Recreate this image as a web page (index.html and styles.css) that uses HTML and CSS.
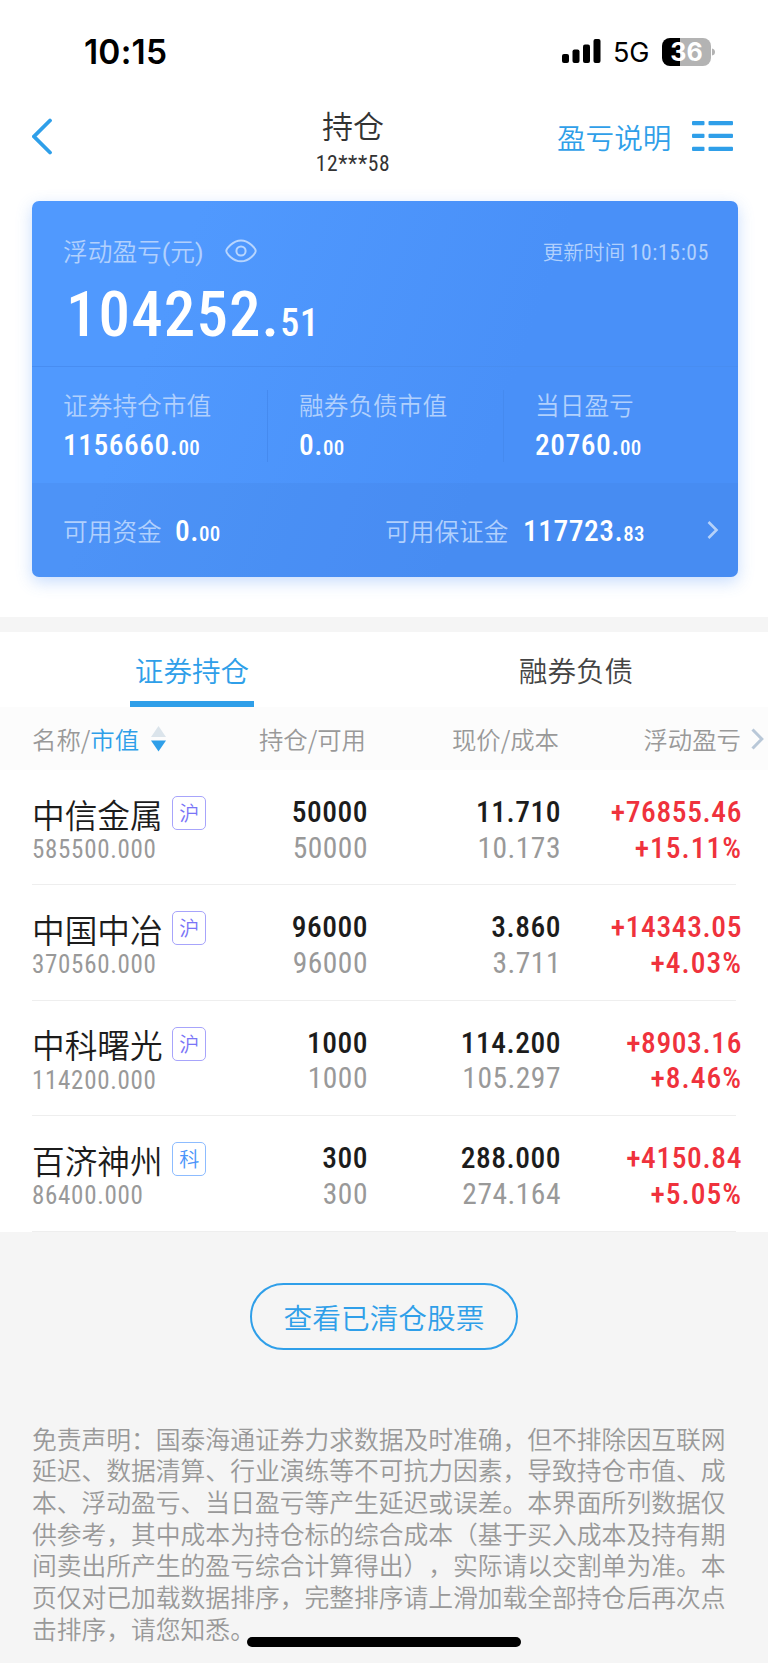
FILE: index.html
```
<!DOCTYPE html>
<html lang="zh-CN">
<head>
    <meta charset="UTF-8">
    <meta name="viewport" content="width=device-width, initial-scale=1.0">
    <title>持仓</title>
    <link rel="stylesheet" href="styles.css">
</head>
<body>
    <div class="status-bar">
        <span class="clock">10:15</span>
        <div class="status-right">
            <svg class="signal" width="39" height="25" viewBox="0 0 39 25">
                <rect x="0" y="15" width="7" height="9" rx="2"/>
                <rect x="10.5" y="10.5" width="7" height="13.5" rx="2"/>
                <rect x="21" y="5.5" width="7" height="18.5" rx="2"/>
                <rect x="31.5" y="0" width="7" height="24" rx="2"/>
            </svg>
            <span class="network">5G</span>
            <div class="battery"><span>36</span></div>
            <svg width="4" height="10" viewBox="0 0 4 10"><path d="M0 1.5Q3 2 3 5T0 8.5z" fill="#b3b3b3"/></svg>
        </div>
    </div>

    <header class="nav">
        <svg class="back" width="22" height="38" viewBox="0 0 22 38">
            <path d="M18 3.5L2 19.5L18 35.5" fill="none" stroke="#2f9fe9" stroke-width="3.8" stroke-linecap="round"/>
        </svg>
        <div class="nav-title">
            <h1>持仓</h1>
            <span class="num">12***58</span>
        </div>
        <div class="nav-right">
            <a>盈亏说明</a>
            <svg width="42" height="32" viewBox="0 0 42 32" fill="#2f9fe9">
                <rect x="0" y="0" width="12.5" height="4.2" rx="1"/>
                <rect x="16.5" y="0" width="24.5" height="4.2" rx="1"/>
                <rect x="0" y="12.8" width="12.5" height="4.2" rx="1"/>
                <rect x="16.5" y="12.8" width="24.5" height="4.2" rx="1"/>
                <rect x="0" y="25.7" width="12.5" height="4.2" rx="1"/>
                <rect x="16.5" y="25.7" width="24.5" height="4.2" rx="1"/>
            </svg>
        </div>
    </header>

    <div class="card-wrap">
        <section class="card">
            <div class="card-top">
                <div class="card-head">
                    <span class="label">浮动盈亏<i class="paren">(</i>元<i class="paren">)</i></span>
                    <svg class="eye" width="32" height="24" viewBox="0 0 32 24" fill="none" stroke="#b7d5fe" stroke-width="2">
                        <path d="M1.3 12C1.3 10 7.5 1.5 16 1.5S30.7 10 30.7 12S24.5 22.3 16 22.3S1.3 14 1.3 12z"/>
                        <circle cx="16" cy="12" r="4.6"/>
                    </svg>
                    <span class="update">更新时间 <span class="num">10:15:05</span></span>
                </div>
                <div class="total num">104252.<small>51</small></div>
            </div>
            <div class="card-mid">
                <div class="item">
                    <span class="label">证券持仓市值</span>
                    <span class="value num">1156660.<small>00</small></span>
                </div>
                <div class="item">
                    <span class="label">融券负债市值</span>
                    <span class="value num">0.<small>00</small></span>
                </div>
                <div class="item">
                    <span class="label">当日盈亏</span>
                    <span class="value num">20760.<small>00</small></span>
                </div>
            </div>
            <div class="card-bottom">
                <span class="label">可用资金</span>
                <span class="value num">0.<small>00</small></span>
                <span class="label margin">可用保证金</span>
                <span class="value num">117723.<small>83</small></span>
                <svg class="more" width="12" height="20" viewBox="0 0 12 20">
                    <path d="M1.5 2L9.5 10L1.5 18" fill="none" stroke="#b5d1f9" stroke-width="2.6"/>
                </svg>
            </div>
        </section>
    </div>

    <div class="tabs">
        <div class="tab active"><span>证券持仓</span></div>
        <div class="tab"><span>融券负债</span></div>
    </div>

    <div class="row table-head">
        <div class="sort">名称/<b>市值</b>
            <svg width="15" height="26" viewBox="0 0 15 26">
                <path d="M7.5 0L15 11H0z" fill="#dbe4eb"/>
                <path d="M7.5 25.5L15 14.5H0z" fill="#2f9fe9"/>
            </svg>
        </div>
        <div>持仓/可用</div>
        <div>现价/成本</div>
        <div>浮动盈亏</div>
        <svg class="scroll-more" width="13" height="22" viewBox="0 0 13 22">
            <path d="M1.5 1.5L10.8 11L1.5 20.5" fill="none" stroke="#b9c8d8" stroke-width="3"/>
        </svg>
    </div>

    <div class="list">
        <div class="row stock">
            <div class="name"><h2>中信金属<em>沪</em></h2><p class="num">585500.000</p></div>
            <div class="num"><p>50000</p><p class="sub">50000</p></div>
            <div class="num"><p>11.710</p><p class="sub">10.173</p></div>
            <div class="num up"><p>+76855.46</p><p>+15.11%</p></div>
        </div>
        <div class="row stock">
            <div class="name"><h2>中国中冶<em>沪</em></h2><p class="num">370560.000</p></div>
            <div class="num"><p>96000</p><p class="sub">96000</p></div>
            <div class="num"><p>3.860</p><p class="sub">3.711</p></div>
            <div class="num up"><p>+14343.05</p><p>+4.03%</p></div>
        </div>
        <div class="row stock">
            <div class="name"><h2>中科曙光<em>沪</em></h2><p class="num">114200.000</p></div>
            <div class="num"><p>1000</p><p class="sub">1000</p></div>
            <div class="num"><p>114.200</p><p class="sub">105.297</p></div>
            <div class="num up"><p>+8903.16</p><p>+8.46%</p></div>
        </div>
        <div class="row stock">
            <div class="name"><h2>百济神州<em class="kc">科</em></h2><p class="num">86400.000</p></div>
            <div class="num"><p>300</p><p class="sub">300</p></div>
            <div class="num"><p>288.000</p><p class="sub">274.164</p></div>
            <div class="num up"><p>+4150.84</p><p>+5.05%</p></div>
        </div>
    </div>

    <button class="cleared">查看已清仓股票</button>

    <p class="disclaimer">免责声明：国泰海通证券力求数据及时准确，但不排除因互联网<br>延迟、数据清算、行业演练等不可抗力因素，导致持仓市值、成<br>本、浮动盈亏、当日盈亏等产生延迟或误差。本界面所列数据仅<br>供参考，其中成本为持仓标的综合成本（基于买入成本及持有期<br>间卖出所产生的盈亏综合计算得出），实际请以交割单为准。本<br>页仅对已加载数据排序，完整排序请上滑加载全部持仓后再次点<br>击排序，请您知悉。</p>

    <div class="home-bar"></div>
</body>
</html>
```
FILE: styles.css
```
* {
    box-sizing: border-box;
}
body {
    position: relative;
    margin: 0;
    width: 768px;
    height: 1663px;
    overflow: hidden;
    background: #f5f5f5;
    font-family: "Noto Sans CJK SC", sans-serif;
    font-weight: 350;
    color: #333;
}
h1, h2, p {
    margin: 0;
    font-weight: inherit;
}
svg {
    display: block;
    flex: none;
}
.num {
    font-family: Roboto, "Noto Sans CJK SC", sans-serif;
    font-weight: 500;
    font-stretch: 80%;
    letter-spacing: 0.5px;
}

/* status bar */
.status-bar {
    display: flex;
    justify-content: space-between;
    align-items: center;
    height: 103px;
    padding: 0 52px 0 84px;
    background: #fff;
    color: #000;
    font-family: Inter, sans-serif;
}
.clock {
    font-size: 33.5px;
    font-weight: 600;
    letter-spacing: 0.2px;
}
.status-right {
    display: flex;
    align-items: center;
}
.network {
    margin: 2px 13px 0 12px;
    font-size: 27px;
    font-weight: 400;
    letter-spacing: -0.3px;
}
.battery {
    width: 49px;
    height: 28px;
    margin-right: 1px;
    border-radius: 8px;
    background: linear-gradient(90deg, #000 18px, #b3b3b3 18px);
    color: #fff;
    font-size: 25px;
    font-weight: 700;
    line-height: 28px;
    text-align: center;
}

/* nav */
.nav {
    display: grid;
    grid-template-columns: 214px 214px 1fr;
    height: 98px;
    padding-left: 32px;
    background: #fff;
}
.back {
    margin-top: 14px;
}
.nav-title {
    text-align: center;
}
.nav-title h1 {
    margin-top: 1px;
    font-size: 31px;
    line-height: 42px;
}
.nav-title .num {
    display: block;
    margin-top: 3px;
    font-size: 21.5px;
    line-height: 30px;
    font-weight: 450;
    letter-spacing: 0.6px;
}
.nav-right {
    display: flex;
    gap: 21px;
    padding: 18px 0 0 97px;
}
.nav-right a {
    color: #2f9fe9;
    font-size: 28.6px;
    line-height: 32px;
}

/* card */
.card-wrap {
    height: 416px;
    padding-left: 32px;
    background: #fff;
}
.card {
    width: 706px;
    height: 376px;
    border-radius: 7px;
    overflow: hidden;
    background: linear-gradient(110deg, #5099fe 20%, #4990f8 65%);
    box-shadow: 0 5px 16px rgba(73, 144, 248, 0.3);
    color: #fff;
}
.label {
    color: #b1d0fd;
    font-size: 24.7px;
    line-height: 36px;
}
.card-top {
    height: 165px;
    padding: 32px 29px 0 31px;
}
.card-head {
    display: flex;
    align-items: center;
    height: 36px;
}
.paren {
    font-style: normal;
    font-family: Roboto, sans-serif;
    font-weight: 400;
}
.eye {
    margin-left: 21px;
}
.update {
    margin-left: auto;
    color: #b1d0fd;
    font-size: 20.6px;
}
.update .num {
    font-size: 21.5px;
    font-weight: 450;
    letter-spacing: 0.7px;
}
.total {
    margin-top: 10px;
    padding-left: 3px;
    font-size: 63px;
    line-height: 72px;
    letter-spacing: 1.1px;
}
.total small {
    font-size: 38px;
    letter-spacing: 0.6px;
}
.card-mid {
    display: grid;
    grid-template-columns: 236px 236px 1fr;
    height: 117px;
    padding-top: 23px;
    border-top: 1px solid #488df1;
}
.item {
    display: flex;
    flex-direction: column;
    height: 72px;
    padding-left: 31px;
    border-right: 1px solid #458aef;
}
.item:last-child {
    border-right: none;
}
.item .label {
    line-height: 29px;
}
.value {
    font-size: 29.5px;
    line-height: 40px;
}
.value small {
    font-size: 21px;
    letter-spacing: 0.2px;
}
.item .value {
    margin-top: 6px;
}
.card-bottom {
    display: flex;
    align-items: center;
    height: 94px;
    padding: 4px 19px 0 31px;
    background: rgba(64, 125, 220, 0.2);
}
.card-bottom .label {
    width: 112px;
    margin-top: -5px;
}
.card-bottom .value {
    width: 210px;
}
.card-bottom .label.margin {
    width: 138px;
}
.card-bottom .margin + .value {
    width: auto;
}
.more {
    margin-left: auto;
    margin-top: -4px;
}

/* tabs */
.tabs {
    display: flex;
    height: 90px;
    border-top: 15px solid #f5f5f5;
    background: #fff;
}
.tab {
    flex: 1;
    text-align: center;
    font-size: 28.6px;
    line-height: 75px;
    color: #444;
}
.tab.active {
    color: #2f9fe9;
}
.tab span {
    display: inline-block;
    width: 124px;
    height: 75px;
}
.tab.active span {
    border-bottom: 6px solid #2f9fe9;
}

/* table */
.row {
    display: grid;
    grid-template-columns: 200px 134px 193px 182px;
    padding-left: 32px;
    text-align: right;
}
.table-head {
    position: relative;
    height: 63px;
    background: #fcfcfc;
    color: #999;
    font-size: 24.4px;
    line-height: 64px;
}
.table-head .sort {
    display: flex;
    align-items: center;
    text-align: left;
}
.sort b {
    font-weight: inherit;
    color: #2f9fe9;
}
.sort svg {
    margin-left: 12px;
}
.scroll-more {
    position: absolute;
    right: 4px;
    top: 21px;
}
.list {
    background: #fff;
}
.stock {
    position: relative;
    height: 115.4px;
    padding-top: 25px;
}
.stock::after {
    content: "";
    position: absolute;
    left: 32px;
    right: 32px;
    bottom: 0;
    height: 1px;
    background: #eee;
}
.stock .num {
    margin-right: -2px;
    font-size: 29.5px;
    line-height: 35.5px;
    color: #1c1c1c;
}
.stock .num .sub {
    color: #999;
    font-weight: 450;
}
.stock .num.up {
    margin-right: -1px;
    color: #ef323c;
    letter-spacing: 0.6px;
}
.stock .up p + p {
    letter-spacing: 1px;
}
.name {
    text-align: left;
}
.name h2 {
    display: flex;
    align-items: center;
    font-size: 32.7px;
    line-height: 35px;
    height: 36px;
    color: #1c1c1c;
    white-space: nowrap;
}
.name em {
    width: 34px;
    height: 34px;
    margin-left: 9.5px;
    border: 1.5px solid #a7a4fb;
    border-radius: 5px;
    color: #7a75f7;
    font-size: 20px;
    line-height: 31px;
    font-style: normal;
    text-align: center;
}
.name em.kc {
    border-color: #8dbcff;
    color: #4a94fa;
}
.stock .name .num {
    margin-top: 1px;
    font-size: 25px;
    line-height: 36px;
    font-weight: 450;
    letter-spacing: 0.7px;
    color: #999;
}

/* footer */
.cleared {
    display: block;
    width: 268px;
    height: 67px;
    margin: 51px 0 0 250px;
    padding: 0;
    border: 2px solid #2f9fe9;
    border-radius: 34px;
    background: none;
    color: #2f9fe9;
    font: inherit;
    font-size: 28.7px;
    line-height: 63px;
}
.disclaimer {
    margin: 73px 0 0 32px;
    color: #999;
    font-size: 24.77px;
    line-height: 31.7px;
    white-space: nowrap;
    text-spacing-trim: space-all;
}
.home-bar {
    position: absolute;
    left: 247px;
    top: 1637px;
    width: 274px;
    height: 10px;
    border-radius: 5px;
    background: #000;
}
```
